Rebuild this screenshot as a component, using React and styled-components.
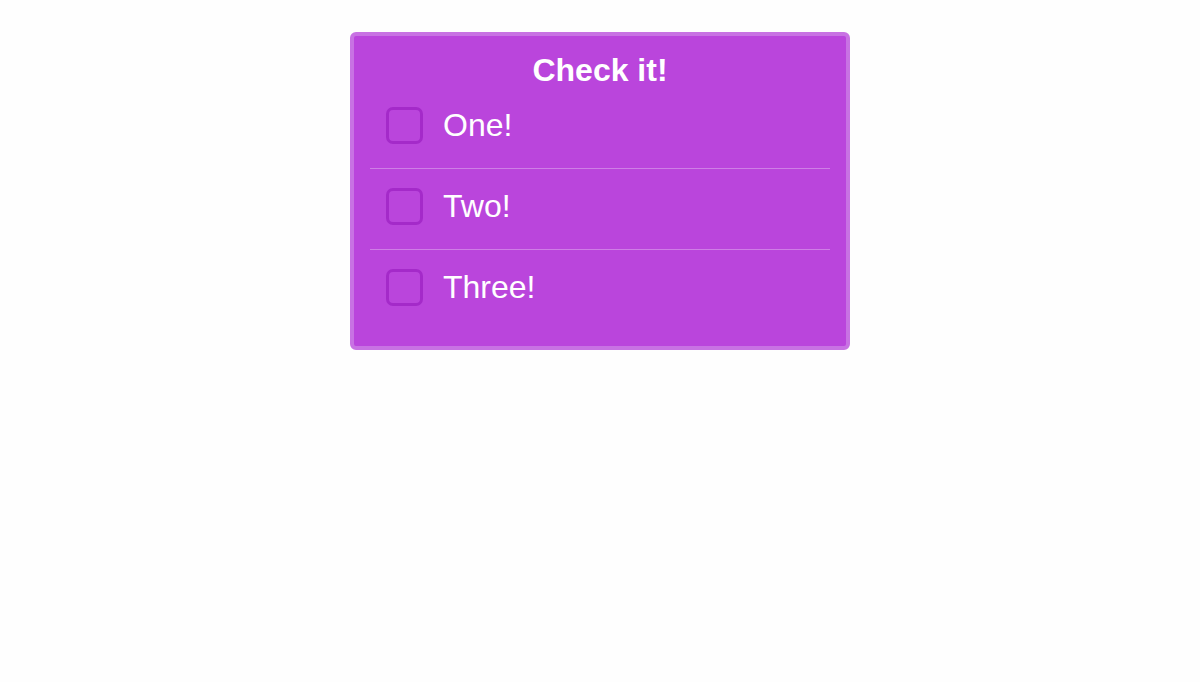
import React from "react";
import styled, { createGlobalStyle } from "styled-components";

const GlobalStyle = createGlobalStyle`
  body {
    margin: 0;
    background: #fefefe;
    font-family: "Liberation Sans", Arial, sans-serif;
  }
`;

const Card = styled.div`
  width: 500px;
  box-sizing: border-box;
  margin: 32px auto 0;
  padding: 16px 16px 15px;
  background: #ba45dc;
  border: 4px solid #c872e3;
  border-radius: 6px;
  color: #fff;
`;

const Title = styled.h2`
  margin: 0;
  font-size: 32px;
  line-height: 36px;
  font-weight: 700;
  text-align: center;
`;

const List = styled.ul`
  list-style: none;
  margin: 0;
  padding: 0;
`;

const Row = styled.li`
  display: flex;
  align-items: center;
  gap: 20px;
  padding: 17px 16px 23px;
  height: 40px;
  border-bottom: 1px solid ${(p) => (p.$last ? "transparent" : "#cf7ee6")};
`;

const Box = styled.span`
  width: 31px;
  height: 31px;
  border: 3px solid #a42ac9;
  border-radius: 7px;
  flex-shrink: 0;
`;

const Label = styled.span`
  font-size: 32px;
  line-height: 37px;
`;

const items = ["One!", "Two!", "Three!"];

export default function App() {
  return (
    <>
      <GlobalStyle />
      <Card>
        <Title>Check it!</Title>
        <List>
          {items.map((item, i) => (
            <Row key={item} $last={i === items.length - 1}>
              <Box />
              <Label>{item}</Label>
            </Row>
          ))}
        </List>
      </Card>
    </>
  );
}
